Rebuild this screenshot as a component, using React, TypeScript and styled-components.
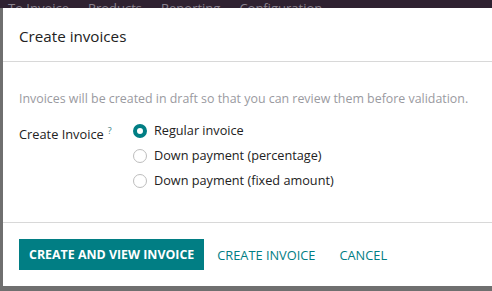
import styled, { createGlobalStyle } from "styled-components";

const GlobalStyle = createGlobalStyle`
  html, body {
    margin: 0;
    padding: 0;
  }
  body {
    background: #6f6f6f;
    font-family: "Open Sans", "Noto Sans", sans-serif;
    width: 492px;
    height: 291px;
    overflow: hidden;
  }
`;

const navItems = ["To Invoice", "Products", "Reporting", "Configuration"];

const options = [
  { label: "Regular invoice", checked: true },
  { label: "Down payment (percentage)", checked: false },
  { label: "Down payment (fixed amount)", checked: false },
];

const App = () => {
  return (
    <>
      <GlobalStyle />
      <Page>
        <NavStrip>
          {navItems.map((item) => (
            <NavItem key={item}>{item}</NavItem>
          ))}
        </NavStrip>
        <Modal>
          <Header>
            <Title>Create invoices</Title>
          </Header>
          <Body>
            <Hint>
              Invoices will be created in draft so that you can review them
              before validation.
            </Hint>
            <FieldRow>
              <FieldLabel>
                Create Invoice<Help>?</Help>
              </FieldLabel>
              <RadioList>
                {options.map((opt) => (
                  <RadioItem key={opt.label}>
                    <RadioDot $checked={opt.checked} />
                    {opt.label}
                  </RadioItem>
                ))}
              </RadioList>
            </FieldRow>
          </Body>
          <Footer>
            <PrimaryButton>CREATE AND VIEW INVOICE</PrimaryButton>
            <LinkButton>CREATE INVOICE</LinkButton>
            <LinkButton>CANCEL</LinkButton>
          </Footer>
        </Modal>
      </Page>
    </>
  );
};

export default App;

const Page = styled.div`
  display: flex;
  flex-direction: column;
  height: 291px;
`;

const NavStrip = styled.div`
  height: 8px;
  background: #2f2231;
  display: flex;
  overflow: hidden;
  padding-left: 8px;
`;

const NavItem = styled.span`
  color: #8b8490;
  font-size: 13px;
  line-height: 13px;
  margin-top: 2px;
  margin-right: 19px;
  white-space: nowrap;
`;

const Modal = styled.div`
  margin-left: 3px;
  width: 500px;
  height: 278px;
  background: #ffffff;
  display: flex;
  flex-direction: column;
`;

const Header = styled.div`
  height: 54px;
  border-bottom: 1px solid #d8d8d8;
  display: flex;
  align-items: center;
  padding-left: 16px;
  padding-top: 2px;
  box-sizing: border-box;
`;

const Title = styled.h4`
  margin: 0;
  font-size: 15.2px;
  font-weight: 400;
  color: #222;
`;

const Body = styled.div`
  flex: 1;
  padding: 28px 16px 0;
`;

const Hint = styled.p`
  margin: 0 0 10px;
  font-size: 12.4px;
  line-height: 18px;
  color: #9a9a9f;
  white-space: nowrap;
`;

const FieldRow = styled.div`
  display: flex;
`;

const FieldLabel = styled.div`
  width: 114px;
  font-size: 12.8px;
  line-height: 25px;
  color: #222;
`;

const Help = styled.sup`
  color: #3f7f86;
  font-size: 9px;
  margin-left: 4px;
`;

const RadioList = styled.div`
  display: flex;
  flex-direction: column;
`;

const RadioItem = styled.label`
  display: flex;
  align-items: center;
  gap: 7px;
  height: 25px;
  font-size: 12.7px;
  line-height: 25px;
  color: #222;
`;

const RadioDot = styled.span<{ $checked: boolean }>`
  box-sizing: border-box;
  width: 14px;
  height: 14px;
  border-radius: 50%;
  background: #ffffff;
  border: ${(p) => (p.$checked ? "4px solid #017e84" : "1px solid #bdbdbd")};
`;

const Footer = styled.div`
  height: 64px;
  box-sizing: border-box;
  border-top: 1px solid #d8d8d8;
  display: flex;
  align-items: center;
  padding-left: 16px;
  gap: 2px;
`;

const PrimaryButton = styled.button`
  height: 31px;
  padding: 0 10px;
  background: #017e84;
  color: #fff;
  border: none;
  border-radius: 0;
  font-family: inherit;
  font-size: 12.4px;
  font-weight: 700;
  cursor: pointer;
`;

const LinkButton = styled.button`
  height: 31px;
  padding: 0 11px;
  background: none;
  color: #017e84;
  border: none;
  font-family: inherit;
  font-size: 12.8px;
  font-weight: 500;
  cursor: pointer;
`;
